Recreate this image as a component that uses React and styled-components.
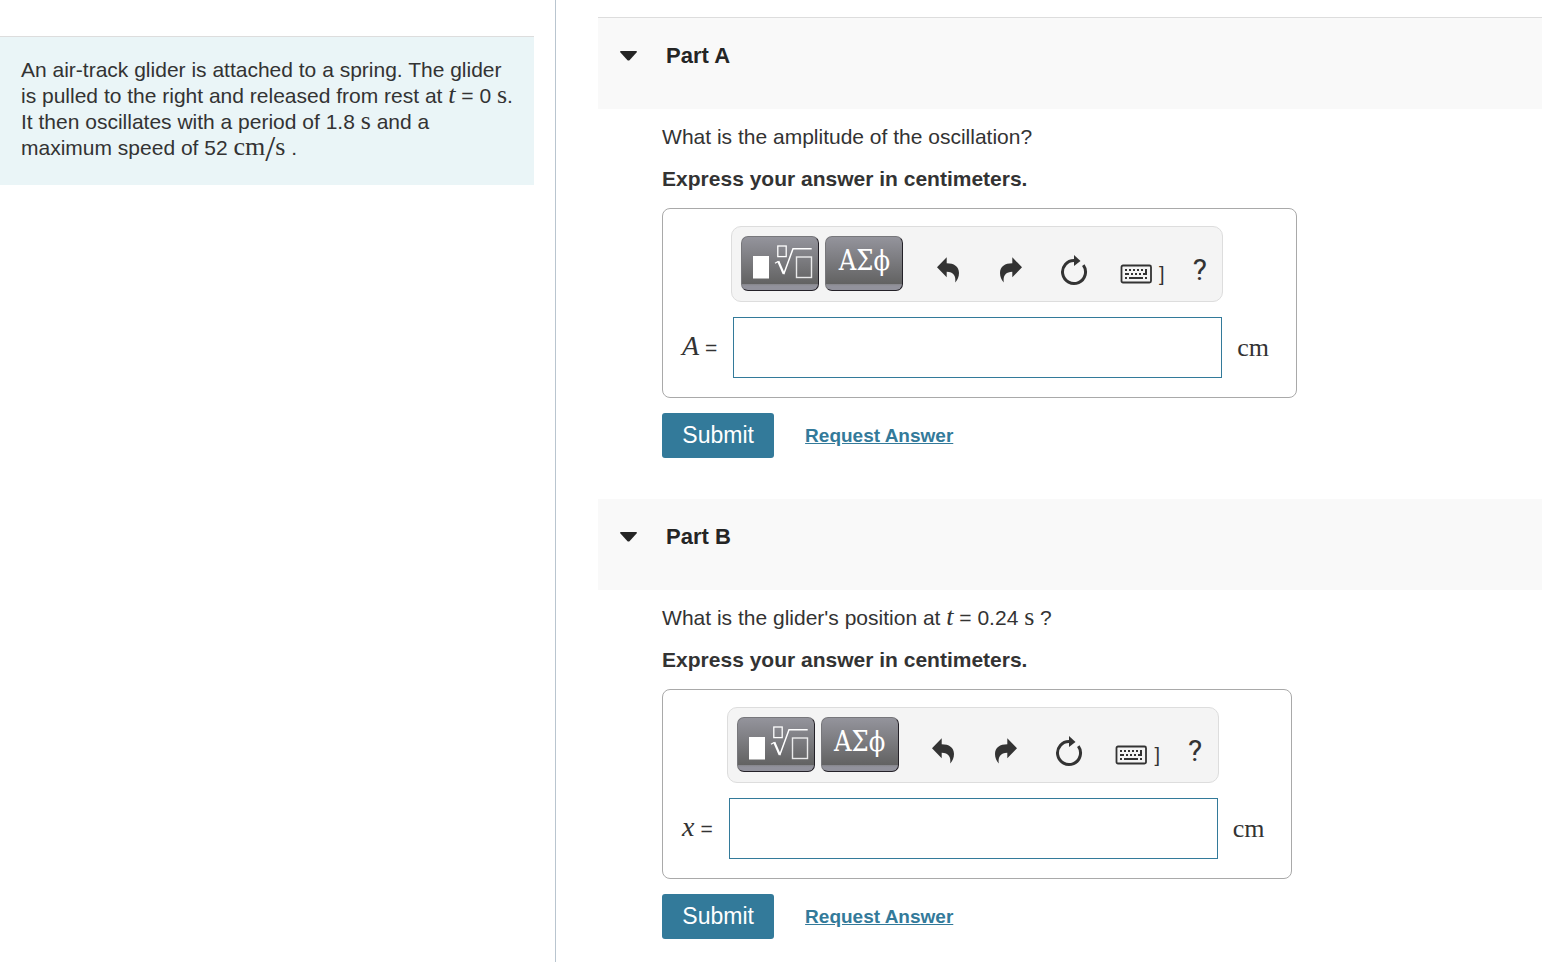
import styled, { createGlobalStyle } from "styled-components";

const GlobalStyle = createGlobalStyle`
  :root {
    --clr-text: #333333;
    --clr-heading: #252525;
    --clr-primary: #337a9a;
    --clr-intro: #eaf5f7;
    --clr-panel: #f9f9f9;
    --clr-toolbar: #f4f4f4;
    --clr-line: #dddddd;
  }

  * {
    box-sizing: border-box;
  }

  body {
    margin: 0;
    background-color: #ffffff;
    color: var(--clr-text);
    font-family: "Liberation Sans", Arial, sans-serif;
    font-size: 21px;
    line-height: 26px;
  }

  button,
  input {
    font-family: inherit;
  }
`;

const Page = styled.div`
  display: flex;
  min-height: 100vh;
`;

const Sidebar = styled.aside`
  border-right: 1px solid #b9c5cf;
  flex: 0 0 calc(36% + 1px);
  padding: 36px 21px 0 0;
`;

const Intro = styled.p`
  background-color: var(--clr-intro);
  border-top: 1px solid var(--clr-line);
  margin: 0;
  padding: 20px 16px 24px 21px;
`;

const Main = styled.main`
  flex: 1;
  min-width: 0;
  padding: 17px 0 0 42px;
`;

const Part = styled.section`
  padding-bottom: 41px;

  &:last-child {
    padding-bottom: 23px;
  }
`;

const PartHeader = styled.h2`
  background-color: var(--clr-panel);
  border-top: ${({ $ruled }) => ($ruled ? "1px solid var(--clr-line)" : "none")};
  margin: 0;
  padding: 25px 22px 40px;
`;

const Toggle = styled.button`
  display: flex;
  align-items: center;
  gap: 29px;
  background: none;
  border: none;
  color: var(--clr-heading);
  cursor: pointer;
  font-size: 22px;
  font-weight: bold;
  line-height: 26px;
  padding: 0;
`;

const PartBody = styled.form`
  padding: 15px 24px 0 64px;
`;

const Question = styled.p`
  font-weight: ${({ $strong }) => ($strong ? "bold" : "normal")};
  margin: 0 0 16px;
`;

const Math = styled.span`
  font-family: "Liberation Serif", "Times New Roman", serif;
  font-size: 26px;
  font-style: ${({ $italic }) => ($italic ? "italic" : "normal")};
  line-height: 20px;
`;

const Slash = styled(Math)`
  font-size: 36px;
  vertical-align: middle;
`;

const AnswerBox = styled.div`
  display: inline-grid;
  grid-template-columns: auto minmax(0, 492px) auto;
  align-items: center;
  gap: 15px 14px;
  border: 1px solid #a9a9a9;
  border-radius: 8px;
  max-width: 100%;
  padding: 17px 27px 19px 19px;
  vertical-align: top;
`;

const Toolbar = styled.div`
  display: flex;
  grid-area: 1 / 2;
  background-color: var(--clr-toolbar);
  border: 1px solid var(--clr-line);
  border-radius: 10px;
  height: 76px;
  padding: 9px 2px 10px 9px;
`;

const Palette = styled.button`
  display: flex;
  align-items: center;
  justify-content: center;
  background: linear-gradient(#94949c, #626262 47px, #85858a 47px, #92929c 49px);
  border: 1px solid #77777b;
  border-right-color: #242128;
  border-bottom-color: #242128;
  border-radius: 7px;
  color: #ffffff;
  flex: 0 0 78px;
  font-family: "DejaVu Serif Condensed", "DejaVu Serif", serif;
  font-size: 27px;
  height: 55px;
  line-height: 32px;
  margin-right: 6px;
  padding: 0 0 5px;
`;

const Tools = styled.div`
  display: flex;
  flex: 1;
  min-width: 0;
  padding-left: 7px;
`;

const Tool = styled.button`
  display: flex;
  align-items: center;
  justify-content: center;
  background: none;
  border: none;
  color: var(--clr-text);
  cursor: pointer;
  flex: 0 1 ${({ $width }) => $width || "63px"};
  font-size: 20px;
  gap: 7px;
  height: 55px;
  line-height: 20px;
  padding: 13px 0 0;
`;

const Shortcuts = styled(Tool)`
  padding-top: 20px;
`;

const Help = styled(Tool)`
  font-family: Roboto, sans-serif;
  font-size: 30px;
`;

const FieldLabel = styled.label`
  grid-area: 2 / 1;
  white-space: nowrap;
`;

const Symbol = styled(Math)`
  font-size: 28px;
`;

const Field = styled.input`
  background-color: #ffffff;
  border: 1px solid var(--clr-primary);
  border-radius: 0;
  color: var(--clr-text);
  font-size: 21px;
  grid-area: 2 / 2;
  height: 61px;
  margin: 0 1px 0 2px;
  min-width: 0;
  outline: none;
  padding: 0 12px;
`;

const Unit = styled(Math)`
  grid-area: 2 / 3;
`;

const Actions = styled.div`
  display: flex;
  align-items: center;
  gap: 31px;
  margin-top: 15px;
`;

const Submit = styled.button`
  background-color: var(--clr-primary);
  border: none;
  border-radius: 3px;
  color: #ffffff;
  cursor: pointer;
  font-size: 23px;
  height: 45px;
  min-width: 112px;
  padding: 0 20px;
`;

const RequestLink = styled.a`
  color: var(--clr-primary);
  font-size: 19px;
  font-weight: bold;
  line-height: 24px;
  text-decoration: underline;
`;

const Caret = () => (
  <svg width="17" height="10" aria-hidden="true">
    <path d="M1 0h15q1 0 1 1L9.5 9.2q-1 .8-2 0L0 1q0-1 1-1z" fill="currentColor" />
  </svg>
);

const TemplateIcon = () => (
  <svg width="76" height="48" viewBox="1 1 76 48" aria-hidden="true">
    <rect x="12" y="20" width="16" height="22.5" fill="#fff" />
    <g fill="none" stroke="#fff">
      <rect x="36.8" y="10" width="8.4" height="10.6" strokeWidth="1.3" />
      <rect x="55.5" y="21" width="15" height="20.5" strokeWidth="1.4" opacity=".85" />
      <path d="M34 27.3l3.5-2" strokeWidth="1.3" />
      <path d="M37.3 25.3l5.4 12.5" strokeWidth="2.2" />
      <path d="M42.7 38.3L52 12.7h18.7" strokeWidth="1.5" />
    </g>
  </svg>
);

const UndoIcon = () => (
  <svg width="32" height="32" aria-hidden="true">
    <path
      d="M5 13.3L14.7 3.3V9.3C22 9.3 27 12.5 27 19C27 23 25.5 26 23.2 28.5C24.2 22 21.5 18 14.7 17.8V23.3z"
      fill="currentColor"
    />
  </svg>
);

const RedoIcon = () => (
  <svg width="32" height="32" aria-hidden="true">
    <path
      d="M27 13.3L17.3 3.3V9.3C10 9.3 5 12.5 5 19C5 23 6.5 26 8.8 28.5C7.8 22 10.5 18 17.3 17.8V23.3z"
      fill="currentColor"
    />
  </svg>
);

const ResetIcon = () => (
  <svg width="32" height="32" aria-hidden="true">
    <path
      d="M25.3 11.2A11.5 11.5 0 1 1 16.5 6.5"
      fill="none"
      stroke="currentColor"
      strokeWidth="3"
    />
    <path d="M16 1l6.500 6L16 12z" fill="currentColor" />
  </svg>
);

const KeyboardIcon = () => (
  <svg width="32" height="20" aria-hidden="true">
    <g fill="none" stroke="currentColor">
      <rect x="1.5" y="1.5" width="29.5" height="17" rx="1.5" strokeWidth="1.8" />
      <path d="M5 6h20" strokeWidth="2" strokeDasharray="2 2" />
      <path d="M5 10h4M11 10h2M15 10h2M19 10h2" strokeWidth="2" />
      <path d="M23 10h3V5" strokeWidth="2" />
      <path d="M5 14h2M9 14h14M25 14h2" strokeWidth="2" />
    </g>
  </svg>
);

const AnswerPart = ({ id, title, symbol, ruled, children }) => {
  return (
    <Part>
      <PartHeader $ruled={ruled}>
        <Toggle type="button" aria-expanded="true">
          <Caret />
          {title}
        </Toggle>
      </PartHeader>
      <PartBody onSubmit={(e) => e.preventDefault()}>
        <Question>{children}</Question>
        <Question $strong>Express your answer in centimeters.</Question>
        <AnswerBox>
          <Toolbar>
            <Palette type="button" aria-label="Templates">
              <TemplateIcon />
            </Palette>
            <Palette type="button">ΑΣϕ</Palette>
            <Tools>
              <Tool type="button" aria-label="Undo">
                <UndoIcon />
              </Tool>
              <Tool type="button" aria-label="Redo">
                <RedoIcon />
              </Tool>
              <Tool type="button" aria-label="Reset">
                <ResetIcon />
              </Tool>
              <Shortcuts type="button" aria-label="Keyboard shortcuts" $width="74px">
                <KeyboardIcon />]
              </Shortcuts>
              <Help type="button" aria-label="Help" $width="41px">
                ?
              </Help>
            </Tools>
          </Toolbar>
          <FieldLabel htmlFor={id}>
            <Symbol $italic>{symbol}</Symbol> =
          </FieldLabel>
          <Field id={id} type="text" autoComplete="off" />
          <Unit>cm</Unit>
        </AnswerBox>
        <Actions>
          <Submit type="submit">Submit</Submit>
          <RequestLink href="#request">Request Answer</RequestLink>
        </Actions>
      </PartBody>
    </Part>
  );
};

export default function App() {
  return (
    <>
      <GlobalStyle />
      <Page>
        <Sidebar>
          <Intro>
            An air-track glider is attached to a spring. The glider is pulled to
            the right and released from rest at <Math $italic>t</Math>
            {" =\u00a00\u00a0"}
            <Math>s</Math>. It then oscillates with a period of 1.8{" "}
            <Math>s</Math> and a maximum speed of 52 <Math>cm</Math>
            <Slash>/</Slash>
            <Math>s</Math> .
          </Intro>
        </Sidebar>
        <Main>
          <AnswerPart id="amplitude" title="Part A" symbol="A" ruled>
            What is the amplitude of the oscillation?
          </AnswerPart>
          <AnswerPart id="position" title="Part B" symbol="x">
            What is the glider's position at <Math $italic>t</Math> = 0.24{" "}
            <Math>s</Math> ?
          </AnswerPart>
        </Main>
      </Page>
    </>
  );
}
